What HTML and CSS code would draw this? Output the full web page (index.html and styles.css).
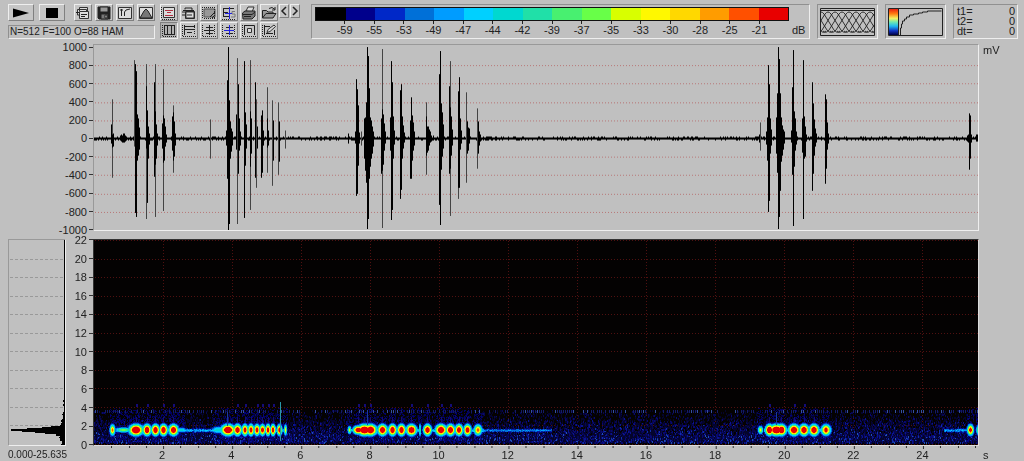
FILE: index.html
```html
<!DOCTYPE html>
<html lang="en">
<head>
<meta charset="utf-8">
<title>Sound analyser</title>
<link rel="stylesheet" href="styles.css">
</head>
<body>
<div class="app">
  <header class="toolbar">
    <div class="transport">
      <div class="button-row">
        <button class="btn btn-wide" aria-label="Play"><svg viewBox="0 0 24 14"><path d="M4 2.500L20 7 4 11.500z" fill="#000"/></svg></button>
        <button class="btn btn-wide btn-last" aria-label="Stop"><svg viewBox="0 0 24 14"><path d="M6 2h12v10H6z" fill="#000"/></svg></button>
        <button class="btn" aria-label="Copy"><svg viewBox="0 0 16 14"><path class="paper" d="M4.500 5V1.500h8V5M2.500 9V3.500h9V6"/><path class="paper" d="M4.500 5.500h9v7h-9z"/><path d="M6 8.500h6M6 10.500h4M1 6.500h3M2.500 9h2"/></svg></button>
        <button class="btn" aria-label="Save"><svg viewBox="0 0 16 14"><path d="M2 1h12v12H3l-1-1z" fill="#222"/><path d="M4 1h8v5H4z" fill="#999"/><path d="M5 8h7v5H5z" fill="#777"/><path d="M9 9h2v3H9z" fill="#ddd"/></svg></button>
        <button class="btn" aria-label="Transfer curve"><svg viewBox="0 0 16 14"><path class="paper" d="M1.500 1.500h13v11h-13z"/><path d="M3 4h3M4.500 3v7M7.500 10V6L9 4l4-1"/></svg></button>
        <button class="btn" aria-label="Window shape"><svg viewBox="0 0 16 14"><path class="paper" d="M1.500 1.500h13v11h-13z"/><path d="M2 12L6 5l2-2 2 2 4 7z" fill="#777"/></svg></button>
      </div>
      <output class="readout">N=512 F=100 O=88 HAM</output>
    </div>
    <div class="tools">
      <div class="tool-grid">
        <button class="btn" aria-label="Select view"><svg viewBox="0 0 16 14"><path class="paper" d="M2.500 1.500h11v10h-11z"/><path class="ruler" d="M1 13.500h14M.5 1v12"/><path class="red" d="M4 4.500h8M6 6.500h4M4 9.500h8"/></svg></button>
        <button class="btn" aria-label="Copy section"><svg viewBox="0 0 16 14"><path d="M4 3.500V2h7v2M2 4.500h11M4.500 5.500h9v7h-9z"/><path class="paper" d="M5 6h8v6H5z"/><path d="M6 9h5M1 6h3M1 9h3"/></svg></button>
        <button class="btn" aria-label="Shade section"><svg viewBox="0 0 16 14"><path d="M3 3h11v8H3z" fill="#999" stroke="#555"/><path class="ruler" d="M1 1.500h14M1.500 1v12M3 12.500h12M13.500 3v9"/><path d="M9 11l5-5M11 12l3-3"/></svg></button>
        <button class="btn" aria-label="Marker"><svg viewBox="0 0 16 14"><path d="M2 2.500h11M2.500 2v9M2 6.500h5M2 10.500h6"/><path d="M14 5.500h-3v2.500h3v3h-4" stroke="#777"/><path class="ruler" d="M1 13.500h14"/><path class="blue" d="M8.500 1v12M4 7.500h7"/></svg></button>
        <button class="btn" aria-label="Print"><svg viewBox="0 0 16 14"><path class="paper" d="M5 5l2-4h6l-2 5z"/><path d="M1.500 7L4 5h10v5l-3 3H2z" fill="#777"/><path d="M2 8.500h9L14 6M3 10.500h7"/></svg></button>
        <button class="btn" aria-label="Open"><svg viewBox="0 0 16 14"><path d="M1.500 12V4.500h4L7 6h5v2M1.500 12L5 7.500h10L12 12z" fill="#999"/><path d="M8 2.500l3-1 3 2M14 1v3h-3"/></svg></button>
        <button class="btn btn-pressed" aria-label="Vertical cursors" aria-pressed="true"><svg viewBox="0 0 16 14"><path class="ruler" d="M1.500 1v12M2 12.500h13"/><path d="M3 1.500h11M3 10.500h11M6.500 1v10M10.500 1v10M13.500 1v10M3.500 1v10"/></svg></button>
        <button class="btn" aria-label="Horizontal cursors"><svg viewBox="0 0 16 14"><path class="ruler" d="M1.500 1v12M2 12.500h13M13.500 1v10"/><path d="M3 2.500h11M3 5.500h11M3.500 1v10M6 8.500h5"/></svg></button>
        <button class="btn" aria-label="Cross cursor"><svg viewBox="0 0 16 14"><path class="ruler" d="M1.500 1v12M2 12.500h13M13.500 1v10"/><path d="M3 6.500h10M8.500 1v10M5 3.500h7M5 9.500h7"/></svg></button>
        <button class="btn" aria-label="Locked cursor"><svg viewBox="0 0 16 14"><path class="ruler" d="M1.500 1v12M2 12.500h13M13.500 1v10"/><path d="M5 3.500h7M5 9.500h7"/><path class="blue" d="M3 6.500h10M8.500 1v10"/></svg></button>
        <button class="btn" aria-label="Zoom box"><svg viewBox="0 0 16 14"><path class="ruler" d="M1.500 1v12M2 12.500h13"/><path d="M3 1.500h10.500V11M3.500 1v10"/><path class="paper" d="M6.500 4.500h4v4h-4z"/></svg></button>
        <button class="btn" aria-label="Annotate"><svg viewBox="0 0 16 14"><path class="ruler" d="M1.500 1v12M2 12.500h13"/><path d="M3 2.500h6M3.500 1v10M13.500 6v5M5 9.500h7"/><path class="paper" d="M6 8.500l1-3 6-4.500 1.500 1.500L9 7.500z"/></svg></button>
      </div>
      <div class="steps">
        <button class="btn btn-step" aria-label="Previous"><svg viewBox="0 0 8 12"><path d="M6 2L2 6l4 4" stroke-width="1.500"/></svg></button>
        <button class="btn btn-step" aria-label="Next"><svg viewBox="0 0 8 12"><path d="M2 2l4 4-4 4" stroke-width="1.500"/></svg></button>
      </div>
    </div>
    <section class="sunken scale" aria-label="Level scale">
      <div class="scale-bar" id="scale-bar"></div>
      <ol class="scale-labels">
        <li>-59</li><li>-55</li><li>-53</li><li>-49</li><li>-47</li><li>-44</li><li>-42</li><li>-39</li><li>-37</li><li>-35</li><li>-33</li><li>-30</li><li>-28</li><li>-25</li><li>-21</li>
      </ol>
      <span class="scale-unit">dB</span>
    </section>
    <div class="sunken preview"><svg id="overlap" viewBox="0 0 55 28" role="img" aria-label="Window overlap"></svg></div>
    <div class="sunken preview">
      <svg viewBox="0 0 55 28" role="img" aria-label="Colour curve">
        <defs><linearGradient id="heat" x1="0" y1="0" x2="0" y2="1"><stop offset="0" stop-color="#e82010"/><stop offset=".18" stop-color="#ff7a10"/><stop offset=".36" stop-color="#f4f060"/><stop offset=".5" stop-color="#70e8b0"/><stop offset=".66" stop-color="#20b8f0"/><stop offset=".84" stop-color="#1030c0"/><stop offset="1" stop-color="#000040"/></linearGradient></defs>
        <path d="M.5 .5h54v27H.5z"/><path d="M1 1h9v26H1z" fill="url(#heat)" stroke="none"/><path d="M10.500 0v28"/>
        <path d="M12.500 27v-7h1v-4h1v-3h2v-2h2V9h3V7h4V6h5V5h4V4h5V3h14"/>
      </svg>
    </div>
    <dl class="sunken times">
      <dt>t1=</dt><dd>0</dd><dt>t2=</dt><dd>0</dd><dt>dt=</dt><dd>0</dd>
    </dl>
  </header>

  <main class="charts">
    <ol class="y-axis y-wave">
      <li>1000</li><li>800</li><li>600</li><li>400</li><li>200</li><li>0</li><li>-200</li><li>-400</li><li>-600</li><li>-800</li><li>-1000</li>
    </ol>
    <div class="plot wave"><canvas id="wave" width="884" height="184" role="img" aria-label="Waveform"></canvas></div>
    <span class="unit">mV</span>

    <div class="plot slice"><canvas id="slice" width="56" height="205" role="img" aria-label="Mean spectrum"></canvas></div>
    <ol class="y-axis y-spec">
      <li>22</li><li>20</li><li>18</li><li>16</li><li>14</li><li>12</li><li>10</li><li>8</li><li>6</li><li>4</li><li>2</li><li>0</li>
    </ol>
    <div class="plot spec"><canvas id="spec" width="884" height="205" role="img" aria-label="Spectrogram"></canvas></div>

    <span class="range">0.000-25.635</span>
    <div class="x-axis">
      <svg id="x-ticks" viewBox="0 0 885 3" preserveAspectRatio="none" aria-hidden="true"></svg>
      <ol class="x-labels">
        <li>2</li><li>4</li><li>6</li><li>8</li><li>10</li><li>12</li><li>14</li><li>16</li><li>18</li><li>20</li><li>22</li><li>24</li>
      </ol>
    </div>
    <span class="unit unit-time">s</span>
  </main>
</div>
<script src="charts.js"></script>
</body>
</html>
```

FILE: styles.css
```css
* { box-sizing: border-box; }

body {
  margin: 0;
  background: #c0c0c0;
  color: #222;
  font: 11px/12px "Liberation Sans", sans-serif;
}

ol, dl, dd { margin: 0; padding: 0; list-style: none; }

.app {
  display: flex;
  flex-direction: column;
  min-height: 100vh;
}

/* Toolbar */
.toolbar {
  display: flex;
  align-items: flex-start;
  gap: 7px;
  padding: 4px 6px 5px 8px;
}

.toolbar svg {
  display: block;
  fill: none;
  stroke: #222;
}

.sunken {
  height: 35px;
  border: 1px solid;
  border-color: #909090 #eee #eee #909090;
}

.transport { width: 147px; }

.button-row { display: flex; gap: 3px; }

.btn {
  width: 18px;
  height: 17px;
  padding: 0;
  background: #c6c6c6;
  border: 1px solid;
  border-color: #eee #808080 #808080 #eee;
}

.btn svg { width: 16px; height: 14px; }
.btn-wide { width: 28px; margin-right: 2px; }
.btn-wide svg { width: 24px; margin: auto; stroke: none; }
.btn-last { margin-right: 6px; }
.btn-pressed {
  background: #b0b0b0;
  border-color: #808080 #eee #eee #808080;
}

.btn .paper { fill: #dcdcdc; stroke: #333; }
.btn .ruler { stroke-dasharray: 1 1; }
.btn .red { stroke: #b03040; }
.btn .blue { stroke: #2020e0; }

.readout {
  display: block;
  margin-top: 4px;
  height: 14px;
  padding-left: 1px;
  border: 1px solid;
  border-color: #909090 #eee #eee #909090;
  font-size: 10px;
  white-space: nowrap;
}

.tools { display: flex; width: 144px; gap: 1px; margin-left: -2px; }
.tool-grid {
  display: grid;
  grid-template-columns: repeat(6, 18px);
  gap: 1px 2px;
}
.steps { display: flex; align-items: flex-start; gap: 1px; }
.btn-step { width: 10px; height: 14px; }
.btn-step svg { width: 8px; height: 12px; }

.scale {
  flex: 1;
  display: grid;
  grid-template-columns: 1fr 20px;
  grid-template-rows: 14px 1fr;
  padding: 2px 0 0 3px;
}

.scale-bar { display: flex; border: 1px solid #111; }
.scale-bar i { flex: 1; }

.scale-labels {
  grid-row: 2;
  display: flex;
  padding: 0 3.125%;
  text-align: center;
}
.scale-labels li { flex: 1; }
.scale-labels li::before {
  content: "";
  display: block;
  width: 1px;
  height: 3px;
  margin: 0 auto;
  background: #222;
}
.scale-unit { grid-row: 2; padding: 3px 0 0 3px; }

.preview { width: 61px; padding: 3px 2px; }
.preview svg { width: 55px; height: 28px; }

.times {
  display: grid;
  grid-template-columns: 1fr auto;
  grid-auto-rows: 10px;
  width: 65px;
  padding: 1px 2px 0 3px;
  line-height: 11px;
}

/* Charts */
.charts {
  flex: 1;
  display: grid;
  grid-template-columns: 58px 27px 1fr 45px;
  grid-template-rows: 186fr 8px 206fr 17px;
  padding-left: 8px;
}

.plot {
  min-height: 0;
  overflow: hidden;
  border: 1px solid;
  border-color: #999 #eee #eee #999;
}
.plot canvas { display: block; width: 100%; height: 100%; }

.wave { grid-area: 1 / 3; }
.slice { grid-area: 3 / 1; }
.spec { grid-area: 3 / 3; border-color: #333 #ddd #ddd #333; }

.y-axis {
  display: flex;
  flex-direction: column;
  justify-content: space-between;
  align-items: flex-end;
}
.y-axis li {
  display: flex;
  align-items: center;
  gap: 2px;
}
.y-axis li::after {
  content: "";
  width: 4px;
  height: 1px;
  background: #333;
}
.y-wave { grid-area: 1 / 1 / 2 / 3; margin: -3px 0 -5px; }
.y-spec { grid-area: 3 / 2; margin: -5px 0; }

.unit { grid-area: 1 / 4; padding: 0 0 0 4px; }
.unit-time { grid-area: 4 / 4; padding-top: 3px; }
.range { grid-area: 4 / 1 / 5 / 3; padding-top: 3px; font-size: 10px; }

.x-axis { grid-area: 4 / 3; }
.x-axis svg { display: block; width: 100%; height: 3px; stroke: #333; }

/* One column per 2 s; the first label is centred on 2 s, the record ends at 25.635 s */
.x-labels {
  display: grid;
  grid-template-columns: 1000fr repeat(12, 2000fr) 635fr;
  text-align: center;
}
.x-labels li:first-child { grid-column: 2; }
```

FILE: charts.js
```js
const palette = ["#000000", "#00008c", "#0028c8", "#0070d8", "#009cff", "#00d0ff", "#00d8d0", "#20e0a8",
  "#48f070", "#68ff48", "#d8ff00", "#fff800", "#ffd800", "#ff9c00", "#ff5000", "#e80000"];
const LEFT = 94, RATE = 34.5;

let seed = 7;
function rnd() {
  seed = (seed * 1664525 + 1013904223) % 4294967296;
  return seed / 4294967296;
}

// Level scale
for (const c of palette) {
  const cell = document.createElement("i");
  cell.style.background = c;
  document.getElementById("scale-bar").append(cell);
}

// Overlapping analysis windows
let arcs = "<path d='M.5 .5h54v27H.5zM0 2.500h55'/>";
for (let x = -39; x < 56; x += 7) {
  arcs += `<path d='M${x} 23q3 3 6 -1L${x + 16} 6q3 -4 6 0L${x + 32} 22q3 4 6 1' stroke-width='.9'/>`;
}
document.getElementById("overlap").innerHTML = arcs;

// Waveform: groups of [column, up, down, faint]
const bursts = [
  [111, 14, 5], [112, 39, 39, 1], [112, 4, 9], [113, 5, 8],
  [120, 3, 2], [121, 4, 3], [122, 3, 4], [123, 5, 4], [124, 5, 4], [125, 3, 3],
  [134, 78, 8, 1], [135, 74, 74], [136, 67, 78], [137, 24, 22], [138, 20, 17], [139, 11, 11],
  [146, 74, 80, 1], [147, 28, 64], [146, 52, 10], [148, 12, 20], [149, 5, 6],
  [154, 56, 38], [155, 74, 78, 1], [155, 27, 26], [156, 14, 20], [157, 5, 7],
  [162, 15, 10], [163, 69, 72, 1], [163, 23, 24], [164, 20, 22], [165, 12, 8], [166, 4, 4],
  [172, 22, 12], [173, 33, 34, 1], [173, 26, 22], [174, 17, 18], [175, 5, 7],
  [210, 19, 20, 1],
  [226, 8, 7], [227, 58, 40], [228, 91, 91], [229, 38, 85], [230, 17, 20], [231, 10, 13], [232, 7, 7],
  [236, 24, 11], [237, 80, 85, 1], [238, 54, 35], [239, 20, 12], [240, 7, 7],
  [244, 77, 79], [245, 26, 27], [246, 14, 10],
  [250, 78, 71, 1], [250, 27, 28], [251, 20, 15],
  [255, 56, 39], [256, 39, 49, 1], [257, 12, 10],
  [261, 23, 39], [262, 28, 34], [263, 8, 7],
  [267, 51, 34, 1], [267, 20, 9], [268, 8, 7],
  [272, 38, 47, 1], [273, 18, 22], [278, 36, 36, 1], [279, 17, 23], [285, 8, 10, 1],
  [348, 5, 5], [355, 7, 5], [356, 59, 57], [357, 49, 55], [358, 33, 27], [359, 6, 5], [361, 7, 7, 1],
  [364, 20, 20], [365, 21, 32], [366, 36, 44], [367, 91, 90], [368, 82, 80], [369, 50, 40], [370, 21, 28], [371, 18, 20], [372, 12, 15], [373, 7, 8],
  [381, 20, 35], [382, 89, 89, 1], [382, 29, 32], [383, 24, 26], [384, 15, 12], [385, 7, 5],
  [390, 21, 12], [391, 77, 81], [392, 56, 71], [393, 22, 20], [394, 8, 6],
  [400, 48, 60], [401, 54, 51], [402, 22, 20], [403, 13, 10], [404, 6, 4],
  [410, 18, 40], [411, 41, 40], [412, 23, 22], [413, 16, 12], [414, 7, 7],
  [426, 36, 36, 1], [426, 22, 17], [427, 12, 14], [428, 12, 12], [429, 9, 7], [430, 7, 4], [431, 3, 3], [433, 3, 2],
  [439, 64, 66], [440, 87, 86], [441, 35, 31], [442, 26, 18], [443, 14, 10],
  [449, 52, 35], [450, 77, 77, 1], [450, 31, 30], [451, 22, 17], [452, 9, 7],
  [458, 47, 60, 1], [458, 47, 49], [459, 61, 49], [460, 20, 11], [461, 8, 5],
  [466, 46, 44, 1], [467, 17, 15], [468, 11, 12], [469, 10, 5],
  [477, 30, 30, 1], [478, 17, 15], [479, 7, 7], [480, 4, 3],
  [760, 16, 12, 1], [759, 4, 4], [766, 7, 6], [767, 21, 22], [768, 73, 73], [769, 54, 62], [770, 20, 15], [771, 9, 7],
  [776, 21, 15], [777, 45, 34], [778, 91, 90], [779, 79, 78], [780, 45, 52], [781, 21, 23], [782, 13, 17], [783, 9, 11], [784, 7, 5],
  [791, 8, 4], [792, 51, 36], [793, 88, 87], [794, 27, 28], [795, 20, 12], [796, 7, 6],
  [802, 20, 14], [803, 78, 80], [804, 22, 20], [805, 12, 18], [806, 4, 3],
  [812, 56, 52], [813, 35, 35], [814, 19, 17], [815, 10, 8], [816, 5, 4],
  [825, 44, 45], [826, 39, 30], [827, 16, 11], [828, 5, 5],
  [967, 3, 3], [968, 4, 4], [969, 25, 31], [970, 23, 20], [971, 4, 4], [976, 4, 3], [977, 4, 3]
];
const wave = document.getElementById("wave").getContext("2d");
wave.fillStyle = "#b87878";
for (const y of [20, 38, 57, 75, 111, 129, 148, 166]) {
  for (let x = 1; x < 884; x += 3) wave.fillRect(x, y, 1, 1);
}
wave.fillStyle = "#000";
for (let x = 0; x < 884; x++) {
  const up = rnd() > 0.7 ? 2 : 1;
  wave.fillRect(x, 93 - up, 1, up + (rnd() > 0.7 ? 2 : 1));
}
for (const [x, up, down, faint] of bursts) {
  wave.fillStyle = faint ? "#444" : "#000";
  wave.fillRect(x - LEFT, 93 - up, 1, up + down);
}

// Spectrogram: blobs of [centre, half width, half height, peak]
const blobs = [
  [112, 2, 4, .95], [123, 7, 2, .62], [135.5, 5, 4, 1.4], [146.5, 3, 4, 1.3], [155, 3, 4, 1.3], [163, 3, 4, 1.3], [173, 3.5, 4, 1.25],
  [181, 4, 2, .45], [218, 6, 3, .45], [227.5, 5, 4, 1.35], [237, 3, 4, 1.25], [244.5, 2.3, 4, 1.2], [250.5, 2.3, 4, 1.2], [256.5, 2.2, 4, 1.15],
  [262, 2.2, 4, 1.15], [267.5, 2, 4, 1.15], [272.5, 2, 4, 1.15], [279, 2, 4, 1.1], [285, 1.2, 4, .75],
  [349, 1.5, 3, .7], [358, 4, 3, 1.3], [364, 5, 4, 1.4], [370, 4.5, 4, 1.4], [382, 3.5, 4, 1.3], [392, 3, 4, 1.3], [401, 3, 4, 1.3], [411, 3.8, 4, 1.3],
  [419.5, 1, 5, .55], [427, 3, 4, 1.25], [440.5, 4, 4, 1.35], [450, 3.2, 4, 1.3], [458.5, 2.8, 4, 1.25], [467, 2.8, 4, 1.2], [477.5, 3, 4, .95],
  [760, 2, 3, .75], [769, 3, 4, 1.35], [776, 5, 4, 1.4], [781, 3.5, 4, 1.35], [793.5, 4, 4, 1.3], [803.5, 3.5, 4, 1.3], [813.5, 3.5, 4, 1.3], [825.5, 3.5, 4, 1.1],
  [970, 2.4, 4, 1.1], [978, 2, 4, .6]
];
const trails = [[116, 178, .38], [178, 212, .34], [212, 286, .42], [348, 420, .42], [424, 484, .4], [484, 552, .27], [764, 830, .42], [944, 968, .33]];
const sctx = document.getElementById("spec").getContext("2d");
sctx.fillStyle = "#040202";
sctx.fillRect(0, 0, 884, 205);
sctx.fillStyle = "#501010";
for (let k = 0; k <= 22; k += 2) {
  for (let x = 1; x < 884; x += 3) sctx.fillRect(x, Math.round((22 - k) * 9.27), 1, 1);
}
for (let t = 2; t < 25; t += 2) {
  for (let y = 1; y < 205; y += 3) sctx.fillRect(Math.round(t * RATE), y, 1, 1);
}

// Background noise, denser towards low frequencies
const noise = ["#04042c", "#060650", "#080870", "#0a1490", "#1030a8", "#2050b8"];
for (let x = 0; x < 884; x++) {
  for (let y = 170; y < 203; y += 1 + Math.floor(rnd() * 2)) {
    const depth = (y - 170) / 33;
    if (rnd() < .12 + depth * 1.1) {
      const level = rnd() * rnd() * (.4 + depth) * 5.5;
      sctx.fillStyle = noise[Math.min(5, Math.floor(level))];
      sctx.fillRect(x, y, 1, 2);
    }
  }
}

// Calls
for (let x = 0; x < 884; x++) {
  const px = x + LEFT;
  const active = blobs.some(b => Math.abs(b[0] - px) < b[1] + 1);
  for (let y = 168; y < 203; y++) {
    let v = 0;
    if (active && rnd() < .3) v = .12;
    for (const [a, b, p] of trails) {
      if (px >= a && px < b) v = Math.max(v, p * Math.exp(-Math.pow((y - 190) / 2, 2)) * (.7 + rnd() * .4));
    }
    for (const [c, w, h, p] of blobs) {
      const q = Math.pow((px - c) / w, 2) + Math.pow((y - 189.5) / h, 2);
      if (q < 5) v = Math.max(v, p * Math.exp(-q * .65));
    }
    if (v > .1) {
      sctx.fillStyle = palette[Math.max(1, Math.min(15, Math.floor(v * 15.5)))];
      sctx.globalAlpha = v < .2 ? .7 : 1;
      sctx.fillRect(x, y, 1, 1);
    }
  }
}

// Faint tone line and overtones
sctx.globalAlpha = 1;
for (let x = 1; x < 884; x += 2) {
  const r = rnd();
  if (r < .6) {
    sctx.fillStyle = r < .18 ? "#3450a0" : "#141c68";
    sctx.fillRect(x, 170, 1, 3);
  }
}
sctx.fillStyle = "#140c78";
for (const [c, , , p] of blobs) {
  if (p < 1.15) continue;
  if (rnd() < .6) sctx.fillRect(Math.round(c) - LEFT, 164, 2, 3);
  sctx.fillRect(Math.round(c) - LEFT, 177, 1, 6);
}
for (const [x, y, h] of [[280, 402, 39], [227, 412, 14], [367, 410, 15], [776, 412, 13]]) {
  sctx.fillStyle = x === 280 ? "#2898a8" : "#1838a0";
  sctx.fillRect(x - LEFT, y - 240, 1, h);
}

// Mean spectrum, drawn against the right edge
const slice = document.getElementById("slice").getContext("2d");
slice.fillStyle = "#999";
for (let k = 2; k <= 20; k += 2) {
  for (let x = 1; x < 54; x += 5) slice.fillRect(x, Math.round((22 - k) * 9.27), 3, 1);
}
slice.fillStyle = "#000";
slice.fillRect(55, 0, 1, 205);
const profile = [[160, 1], [172, 2], [180, 3], [185, 5], [186, 13], [187, 22], [188, 38], [189, 54], [190, 54], [191, 42], [192, 30], [193, 20], [194, 9], [196, 5], [201, 3], [205, 2]];
for (let i = 0; i < profile.length - 1; i++) {
  for (let y = profile[i][0]; y < profile[i + 1][0]; y++) {
    const w = profile[i][1] + (rnd() > .7 ? 1 : 0);
    slice.fillRect(56 - w, y, w, 1);
  }
}

// Time ticks every half second
let ticks = "";
for (let i = 1; i <= 51; i++) {
  const x = Math.round(i * RATE / 2) + 1.5;
  ticks += `<path d='M${x} 0v${i % 4 ? 2 : 3}'/>`;
}
document.getElementById("x-ticks").innerHTML = ticks;
```
